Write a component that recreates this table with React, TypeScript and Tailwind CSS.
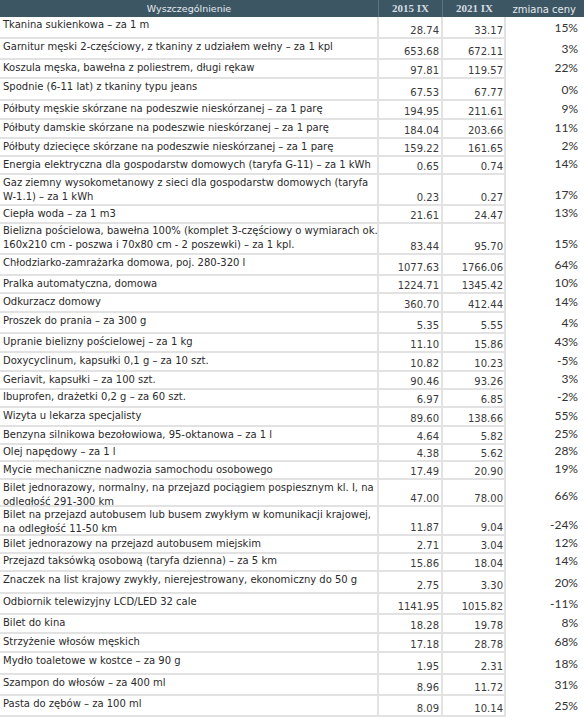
import React from 'react';

type Row = {
  label: string[];
  a: string;
  b: string;
  change: string;
  h: string;
};

const rows: Row[] = [
  { label: ['Tkanina sukienkowa – za 1 m'], a: '28.74', b: '33.17', change: '15%', h: 'h-[22px]' },
  { label: ['Garnitur męski 2-częściowy, z tkaniny z udziałem wełny – za 1 kpl'], a: '653.68', b: '672.11', change: '3%', h: 'h-[21px]' },
  { label: ['Koszula męska, bawełna z poliestrem, długi rękaw'], a: '97.81', b: '119.57', change: '22%', h: 'h-[19px]' },
  { label: ['Spodnie (6-11 lat) z tkaniny typu jeans'], a: '67.53', b: '67.77', change: '0%', h: 'h-[22px]' },
  { label: ['Półbuty męskie skórzane na podeszwie nieskórzanej – za 1 parę'], a: '194.95', b: '211.61', change: '9%', h: 'h-[19px]' },
  { label: ['Półbuty damskie skórzane na podeszwie nieskórzanej – za 1 parę'], a: '184.04', b: '203.66', change: '11%', h: 'h-[19px]' },
  { label: ['Półbuty dziecięce skórzane na podeszwie nieskórzanej – za 1 parę'], a: '159.22', b: '161.65', change: '2%', h: 'h-[18px]' },
  { label: ['Energia elektryczna dla gospodarstw domowych (taryfa G-11) – za 1 kWh'], a: '0.65', b: '0.74', change: '14%', h: 'h-[18px]' },
  { label: ['Gaz ziemny wysokometanowy z sieci dla gospodarstw domowych (taryfa', 'W-1.1) – za 1 kWh'], a: '0.23', b: '0.27', change: '17%', h: 'h-[31px]' },
  { label: ['Ciepła woda – za 1 m3'], a: '21.61', b: '24.47', change: '13%', h: 'h-[17px]' },
  { label: ['Bielizna pościelowa, bawełna 100% (komplet 3-częściowy o wymiarach ok.', '160x210 cm - poszwa i 70x80 cm - 2 poszewki) – za 1 kpl.'], a: '83.44', b: '95.70', change: '15%', h: 'h-[32px]' },
  { label: ['Chłodziarko-zamrażarka domowa, poj. 280-320 l'], a: '1077.63', b: '1766.06', change: '64%', h: 'h-[21px]' },
  { label: ['Pralka automatyczna, domowa'], a: '1224.71', b: '1345.42', change: '10%', h: 'h-[18px]' },
  { label: ['Odkurzacz domowy'], a: '360.70', b: '412.44', change: '14%', h: 'h-[19px]' },
  { label: ['Proszek do prania – za 300 g'], a: '5.35', b: '5.55', change: '4%', h: 'h-[21px]' },
  { label: ['Upranie bielizny pościelowej – za 1 kg'], a: '11.10', b: '15.86', change: '43%', h: 'h-[19px]' },
  { label: ['Doxycyclinum, kapsułki 0,1 g – za 10 szt.'], a: '10.82', b: '10.23', change: '-5%', h: 'h-[19px]' },
  { label: ['Geriavit, kapsułki – za 100 szt.'], a: '90.46', b: '93.26', change: '3%', h: 'h-[17px]' },
  { label: ['Ibuprofen, drażetki 0,2 g – za 60 szt.'], a: '6.97', b: '6.85', change: '-2%', h: 'h-[19px]' },
  { label: ['Wizyta u lekarza specjalisty'], a: '89.60', b: '138.66', change: '55%', h: 'h-[19px]' },
  { label: ['Benzyna silnikowa bezołowiowa, 95-oktanowa – za 1 l'], a: '4.64', b: '5.82', change: '25%', h: 'h-[17px]' },
  { label: ['Olej napędowy – za 1 l'], a: '4.38', b: '5.62', change: '28%', h: 'h-[18px]' },
  { label: ['Mycie mechaniczne nadwozia samochodu osobowego'], a: '17.49', b: '20.90', change: '19%', h: 'h-[18px]' },
  { label: ['Bilet jednorazowy, normalny, na przejazd pociągiem pospiesznym kl. I, na', 'odległość 291-300 km'], a: '47.00', b: '78.00', change: '66%', h: 'h-[27px]' },
  { label: ['Bilet na przejazd autobusem lub busem zwykłym w komunikacji krajowej,', 'na odległość 11-50 km'], a: '11.87', b: '9.04', change: '-24%', h: 'h-[29px]' },
  { label: ['Bilet jednorazowy na przejazd autobusem miejskim'], a: '2.71', b: '3.04', change: '12%', h: 'h-[17px]' },
  { label: ['Przejazd taksówką osobową (taryfa dzienna) – za 5 km'], a: '15.86', b: '18.04', change: '14%', h: 'h-[19px]' },
  { label: ['Znaczek na list krajowy zwykły, nierejestrowany, ekonomiczny do 50 g'], a: '2.75', b: '3.30', change: '20%', h: 'h-[22px]' },
  { label: ['Odbiornik telewizyjny LCD/LED 32 cale'], a: '1141.95', b: '1015.82', change: '-11%', h: 'h-[21px]' },
  { label: ['Bilet do kina'], a: '18.28', b: '19.78', change: '8%', h: 'h-[19px]' },
  { label: ['Strzyżenie włosów męskich'], a: '17.18', b: '28.78', change: '68%', h: 'h-[19px]' },
  { label: ['Mydło toaletowe w kostce – za 90 g'], a: '1.95', b: '2.31', change: '18%', h: 'h-[22px]' },
  { label: ['Szampon do włosów – za 400 ml'], a: '8.96', b: '11.72', change: '31%', h: 'h-[21px]' },
  { label: ['Pasta do zębów – za 100 ml'], a: '8.09', b: '10.14', change: '25%', h: 'h-[21px]' },
];

const cols = 'grid grid-cols-[379px_64px_63px_78px]';

const App = () => {
  return (
    <div className="w-[584px] min-h-[720px] bg-white font-['DejaVu_Sans',Verdana,sans-serif] text-[10px] text-[#2a2a2a]">
      {/* naglowek */}
      <div className={`${cols} h-[17px] bg-[#3d5664] text-[#e4eaee]`}>
        <div className="flex items-center justify-center border-r border-[#5b7280] text-[9.5px] leading-[17px]">
          Wyszczególnienie
        </div>
        <div className="flex items-center justify-center border-r border-[#5b7280] font-['Liberation_Serif',serif] font-bold text-[11px] text-[#d3dde3]">
          2015 IX
        </div>
        <div className="flex items-center justify-center font-['Liberation_Serif',serif] font-bold text-[11px] text-[#d3dde3]">
          2021 IX
        </div>
        <div className="flex items-end justify-end pr-[8px] pb-[1px] text-[10px] leading-[12px] text-[#e4eaee]">
          zmiana ceny
        </div>
      </div>

      {/* wiersze */}
      {rows.map((r, i) => (
        <div key={i} className={`${cols} ${r.h}`}>
          <div className="border-b-2 border-r-2 border-[#e2e2e2] pl-[3px] pt-[1px] leading-[14px] whitespace-nowrap overflow-hidden">
            {r.label.map((line, j) => (
              <div key={j}>{line}</div>
            ))}
          </div>
          <div className="flex items-end justify-end border-b-2 border-r-2 border-[#e2e2e2] pr-[2px] leading-[12px] text-[#3a3a3a]">
            {r.a}
          </div>
          <div className="flex items-end justify-end border-b-2 border-r-2 border-[#e2e2e2] pr-[1px] leading-[12px] text-[#3a3a3a]">
            {r.b}
          </div>
          <div className="flex items-end justify-end pr-[6px] pb-[4px] font-['Lato',sans-serif] text-[12px] leading-[14px] text-[#333]">
            {r.change}
          </div>
        </div>
      ))}
    </div>
  );
};

export default App;
